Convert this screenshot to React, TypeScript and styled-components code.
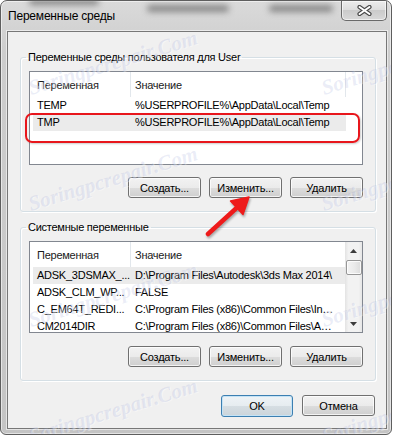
import styled, { createGlobalStyle, css } from 'styled-components';

const GlobalStyle = createGlobalStyle`
  html, body {
    margin: 0;
    padding: 0;
    background: #ffffff;
  }
  body {
    font-family: "Liberation Sans", Arial, sans-serif;
    font-size: 11px;
    letter-spacing: -0.25px;
    color: #000000;
  }
  * {
    box-sizing: border-box;
  }
`;

const Window = styled.div`
  position: relative;
  width: 392px;
  height: 435px;
  border: 1px solid #5e5e5e;
  border-radius: 7px 7px 6px 6px;
  background: linear-gradient(180deg, #dadada 0%, #cdcdcd 12%, #c9c9c9 60%, #c4c4c4 100%);
  box-shadow: inset 0 0 0 1px rgba(255, 255, 255, 0.55);
  padding: 0 4px 5px 6px;
  display: flex;
  flex-direction: column;
  overflow: hidden;
`;

const Smudge = styled.div`
  position: absolute;
  height: 7px;
  border-radius: 4px;
  background: rgba(70, 70, 70, 0.55);
  filter: blur(3px);
  pointer-events: none;
`;

const TitleBar = styled.div`
  position: relative;
  height: 30px;
  display: flex;
  justify-content: space-between;
  align-items: flex-start;
`;

const Title = styled.div`
  padding-left: 1px;
  height: 30px;
  line-height: 30px;
  font-size: 12px;
  letter-spacing: -0.2px;
  color: #000000;
`;

const CloseButton = styled.div`
  width: 46px;
  height: 20px;
  border: 1px solid #6a6a6a;
  border-top: none;
  border-radius: 0 0 5px 5px;
  background: linear-gradient(180deg, #ececec 0%, #dedede 45%, #cbcbcb 50%, #d9d9d9 100%);
  box-shadow: inset 0 0 0 1px rgba(255, 255, 255, 0.6);
  display: flex;
  align-items: center;
  justify-content: center;
`;

const Client = styled.div`
  position: relative;
  flex: 1;
  background: #f0f0f0;
  border: 1px solid #777777;
  box-shadow: 0 0 0 1px rgba(255, 255, 255, 0.55);
  padding: 18px 10px 0 12px;
  display: flex;
  flex-direction: column;
`;

const GroupBox = styled.fieldset<{ $gap: number }>`
  margin: ${({ $gap }) => $gap}px 0 0 0;
  min-width: 0;
  border: 1px solid #d5dfe5;
  border-radius: 3px;
  box-shadow: inset 1px 1px 0 #ffffff, 1px 1px 0 #ffffff;
  padding: 7px 12px 13px 8px;
`;

const Legend = styled.legend`
  margin-left: -3px;
  padding: 0 2px;
  line-height: 14px;
  color: #000000;
`;

const ListView = styled.div<{ $height: number }>`
  height: ${({ $height }) => $height}px;
  border: 1px solid #828790;
  background: #ffffff;
  display: flex;
  overflow: hidden;
`;

const ListBody = styled.div`
  flex: 1;
  min-width: 0;
  overflow: hidden;
`;

const columns = css`
  display: grid;
  grid-template-columns: 101px 215px 1fr;
`;

const HeaderRow = styled.div`
  ${columns};
  height: 25px;
`;

const HeaderCell = styled.div<{ $pad: number; $last?: boolean }>`
  padding-left: ${({ $pad }) => $pad}px;
  border-right: ${({ $last }) => ($last ? 'none' : '1px solid #e2e7ec')};
  display: flex;
  align-items: center;
  white-space: nowrap;
  overflow: hidden;
  color: #1a1a1a;
`;

const DataRow = styled.div<{ $selected?: boolean }>`
  ${columns};
  position: relative;
  height: 17px;
  line-height: 17px;
  ${({ $selected }) =>
    $selected &&
    css`
      &::before {
        content: '';
        position: absolute;
        left: 3px;
        top: 0;
        width: 313px;
        height: 17px;
        background: #ebebeb;
      }
    `}
`;

const Cell = styled.div<{ $pad: number }>`
  position: relative;
  padding: 0 0 0 ${({ $pad }) => $pad}px;
  white-space: nowrap;
  overflow: hidden;
  text-overflow: ellipsis;
`;

const ScrollBar = styled.div`
  width: 17px;
  flex: none;
  display: flex;
  flex-direction: column;
  background: linear-gradient(90deg, #e3e3e3 0%, #f2f2f2 20%, #f2f2f2 80%, #e6e6e6 100%);
`;

const ScrollArrow = styled.div`
  height: 17px;
  display: flex;
  align-items: center;
  justify-content: center;
`;

const ScrollThumb = styled.div`
  margin: 1px 0 0 1px;
  height: 15px;
  border: 1px solid #979797;
  border-radius: 2px;
  background: linear-gradient(90deg, #f3f3f3 0%, #ebebeb 50%, #dcdcdc 100%);
  box-shadow: inset 0 0 0 1px rgba(255, 255, 255, 0.8);
`;

const ScrollTrack = styled.div`
  flex: 1;
`;

const ButtonRow = styled.div<{ $top: number }>`
  display: flex;
  justify-content: flex-end;
  gap: 8px;
  margin-top: ${({ $top }) => $top}px;
`;

const Button = styled.button<{ $default?: boolean }>`
  width: 73px;
  height: 21px;
  padding: 0;
  font-family: inherit;
  font-size: 11px;
  letter-spacing: -0.2px;
  color: #000000;
  border: 1px solid #707070;
  border-radius: 3px;
  background: linear-gradient(180deg, #f2f2f2 0%, #ebebeb 50%, #dddddd 50%, #cfcfcf 100%);
  box-shadow: inset 0 0 0 1px rgba(255, 255, 255, 0.75);
  ${({ $default }) =>
    $default &&
    css`
      height: 22px;
      width: 72px;
      border-color: #3c7fb1;
      background: linear-gradient(180deg, #eef3f6 0%, #e6ecf0 50%, #d6dee3 50%, #cbd4da 100%);
      box-shadow: inset 0 0 0 1px #c4e3f6;
    `}
`;

const Footer = styled.div`
  display: flex;
  justify-content: flex-end;
  gap: 9px;
  margin-top: 14px;
  padding-right: 1px;
`;

const Highlight = styled.div`
  position: absolute;
  left: 24px;
  top: 112px;
  width: 335px;
  height: 30px;
  border: 2px solid #e8161c;
  border-radius: 7px;
  box-shadow: 1px 1px 2px rgba(0, 0, 0, 0.2);
  pointer-events: none;
`;

const Arrow = styled.svg`
  position: absolute;
  left: 195px;
  top: 185px;
  overflow: visible;
  filter: drop-shadow(1px 2px 1px rgba(0, 0, 0, 0.3));
  pointer-events: none;
`;

const Watermark = styled.span`
  position: absolute;
  transform: translate(-50%, -50%) rotate(-17deg);
  font-family: "Liberation Serif", serif;
  font-style: italic;
  font-weight: bold;
  font-size: 21px;
  letter-spacing: 0;
  white-space: nowrap;
  color: rgba(150, 162, 214, 0.2);
  text-shadow: 1px 1px 0 rgba(255, 255, 255, 0.35);
  pointer-events: none;
`;

type Row = { name: string; value: string; selected?: boolean };

const userRows: Row[] = [
  { name: 'TEMP', value: '%USERPROFILE%\\AppData\\Local\\Temp' },
  { name: 'TMP', value: '%USERPROFILE%\\AppData\\Local\\Temp', selected: true },
];

const systemRows: Row[] = [
  { name: 'ADSK_3DSMAX_...', value: 'D:\\Program Files\\Autodesk\\3ds Max 2014\\', selected: true },
  { name: 'ADSK_CLM_WP...', value: 'FALSE' },
  { name: 'C_EM64T_REDI...', value: 'C:\\Program Files (x86)\\Common Files\\In…' },
  { name: 'CM2014DIR', value: 'C:\\Program Files (x86)\\Common Files\\A…' },
];

const marks = [
  [112, 62], [112, 178], [112, 294], [112, 410],
  [405, 62], [405, 178], [405, 294], [405, 410],
];

const smudges = [
  { left: 28, top: -3, width: 70 },
  { left: 146, top: 4, width: 82 },
  { left: 268, top: 4, width: 64 },
];

function VarList({ rows, height, scroll }: { rows: Row[]; height: number; scroll?: boolean })
{
  return (
    <ListView $height={height}>
      <ListBody>
        <HeaderRow>
          <HeaderCell $pad={7}>Переменная</HeaderCell>
          <HeaderCell $pad={4}>Значение</HeaderCell>
          <HeaderCell $pad={0} $last />
        </HeaderRow>
        {rows.map((r) => (
          <DataRow key={r.name} $selected={r.selected}>
            <Cell $pad={7}>{r.name}</Cell>
            <Cell $pad={4}>{r.value}</Cell>
          </DataRow>
        ))}
      </ListBody>
      {scroll && (
        <ScrollBar>
          <ScrollArrow>
            <svg width="7" height="4" viewBox="0 0 7 4">
              <path d="M3.5 0 L7 4 L0 4 Z" fill="#3c3c3c" />
            </svg>
          </ScrollArrow>
          <ScrollThumb />
          <ScrollTrack />
          <ScrollArrow>
            <svg width="7" height="4" viewBox="0 0 7 4">
              <path d="M0 0 L7 0 L3.5 4 Z" fill="#3c3c3c" />
            </svg>
          </ScrollArrow>
        </ScrollBar>
      )}
    </ListView>
  );
}

export default function App()
{
  return (
    <>
      <GlobalStyle />
      <Window>
        {smudges.map((s) => (
          <Smudge key={s.left} style={{ left: s.left, top: s.top, width: s.width }} />
        ))}
        <TitleBar>
          <Title>Переменные среды</Title>
          <CloseButton>
            <svg width="15" height="11" viewBox="0 0 15 11">
              <path d="M2.5 2 L12.5 9 M12.5 2 L2.5 9" stroke="#4a4a4a" strokeWidth="4.2" strokeLinecap="round" />
              <path d="M2.5 2 L12.5 9 M12.5 2 L2.5 9" stroke="#ffffff" strokeWidth="2" strokeLinecap="round" />
            </svg>
          </CloseButton>
        </TitleBar>
        <Client>
          <GroupBox $gap={0}>
            <Legend>Переменные среды пользователя для User</Legend>
            <VarList rows={userRows} height={94} />
            <ButtonRow $top={12}>
              <Button>Создать...</Button>
              <Button>Изменить...</Button>
              <Button>Удалить</Button>
            </ButtonRow>
          </GroupBox>
          <GroupBox $gap={8}>
            <Legend>Системные переменные</Legend>
            <VarList rows={systemRows} height={92} scroll />
            <ButtonRow $top={13}>
              <Button>Создать...</Button>
              <Button>Изменить...</Button>
              <Button>Удалить</Button>
            </ButtonRow>
          </GroupBox>
          <Footer>
            <Button $default>OK</Button>
            <Button>Отмена</Button>
          </Footer>
        </Client>
        <Highlight />
        <Arrow width="65" height="55" viewBox="0 0 65 55">
          <path d="M12 48 L40 22.5" stroke="#ee1b1b" strokeWidth="4.5" strokeLinecap="round" />
          <path d="M53 11 L47 28.5 L34.5 15 Z" fill="#ee1b1b" stroke="#ee1b1b" strokeWidth="1.5" strokeLinejoin="round" />
        </Arrow>
        {marks.map(([x, y]) => (
          <Watermark key={`${x}-${y}`} style={{ left: x, top: y }}>
            Soringpcrepair.Com
          </Watermark>
        ))}
      </Window>
    </>
  );
}
